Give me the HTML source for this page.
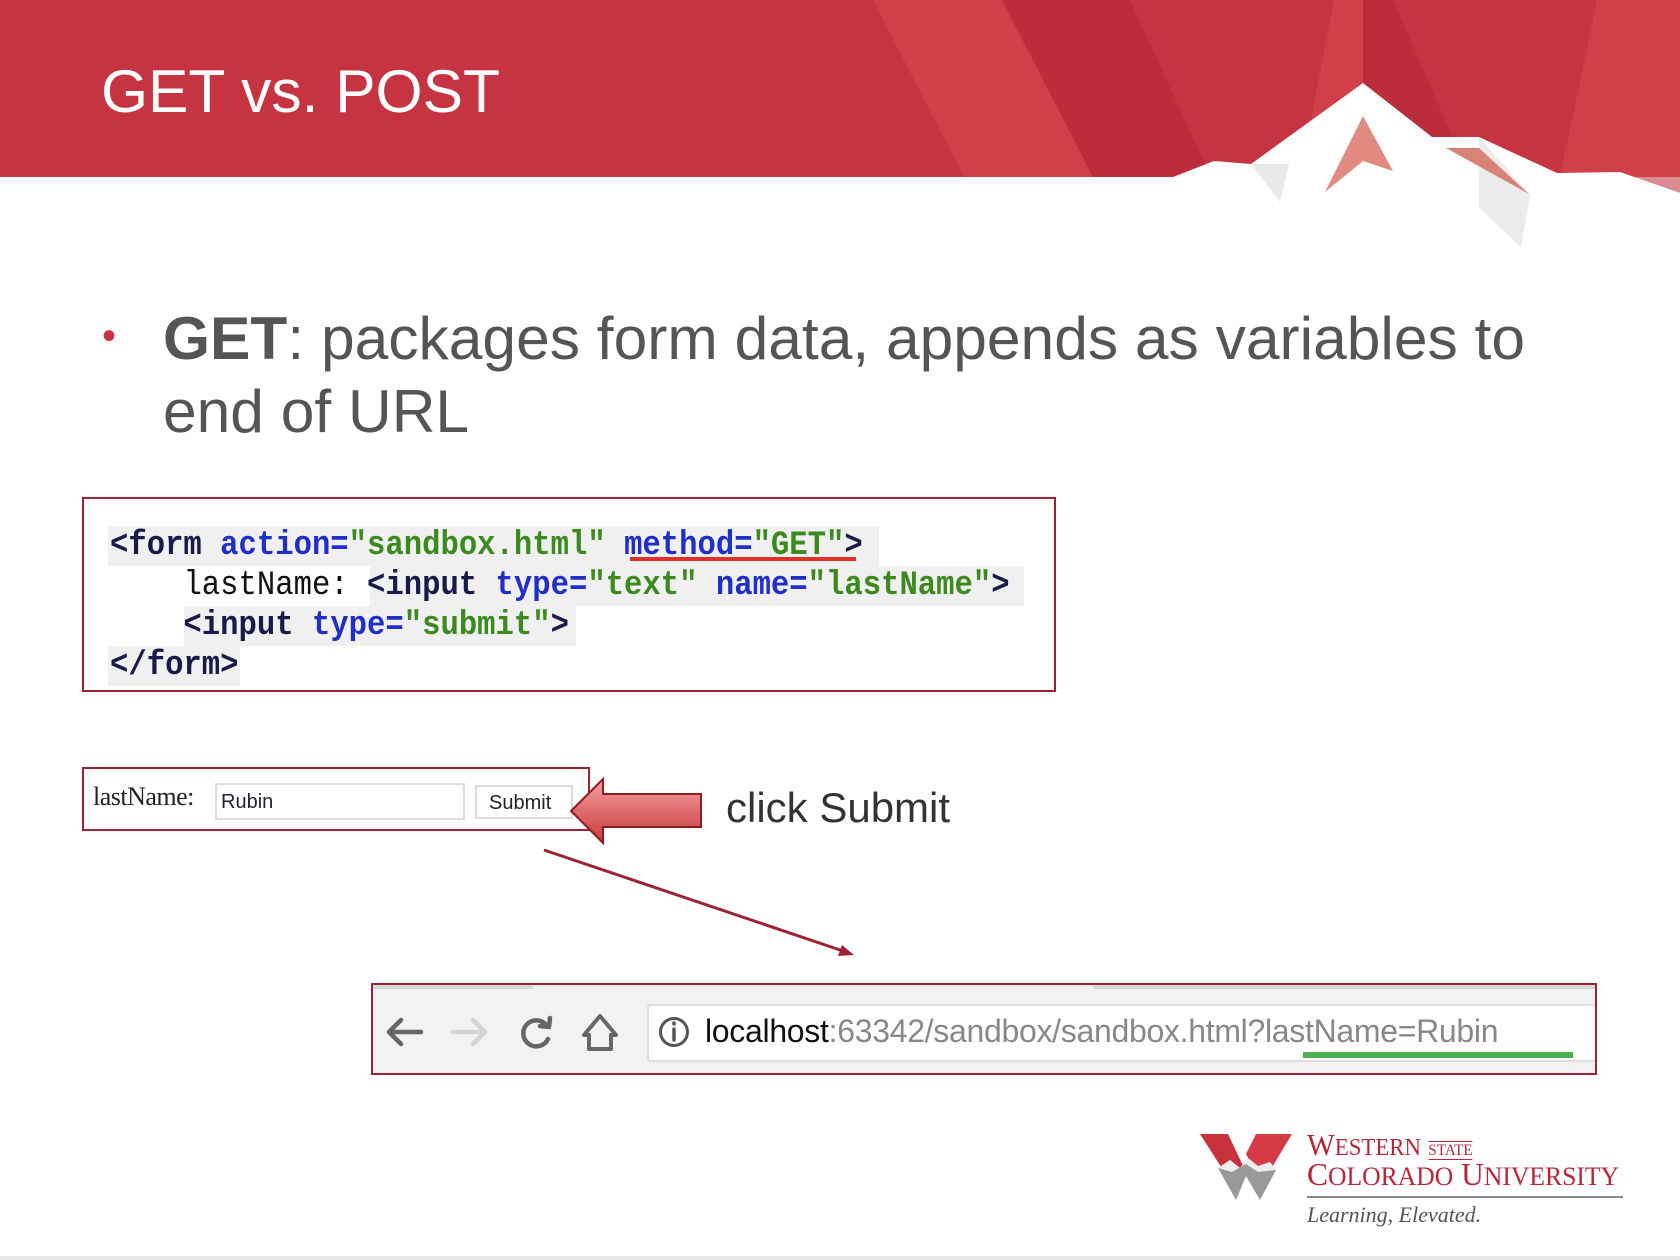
<!DOCTYPE html>
<html><head><meta charset="utf-8"><style>
*{margin:0;padding:0;box-sizing:border-box}
body{width:1680px;height:1260px;position:relative;background:#fff;overflow:hidden;font-family:"Liberation Sans",sans-serif}
.abs{position:absolute;white-space:nowrap}
.code{font-family:"Liberation Mono",monospace;font-size:30.6px;letter-spacing:0px;font-weight:bold;line-height:40px;white-space:pre;transform:scaleY(1.12);transform-origin:left center}
.b{color:#1f2fc8}.g{color:#3a8a1e}.k{color:#1a1a4a}.n{font-weight:normal;color:#111}
</style></head><body>
<svg class="abs" style="left:0;top:0" width="1680" height="260" viewBox="0 0 1680 260">
<rect x="0" y="0" width="1680" height="177" fill="#c63441"/>
<polygon points="873,0 1002,0 1093,177 964,177" fill="#d13f48"/>
<polygon points="1002,0 1130,0 1211,177 1093,177" fill="#bc2d3b"/>
<polygon points="1334,0 1363,0 1363,177 1300,177" fill="#d13f48"/>
<polygon points="1363,0 1393,0 1470,177 1363,177" fill="#bc2d3b"/>
<polygon points="1597,0 1680,0 1680,177 1560,177" fill="#d13f48"/>
<polygon points="1560,177 1680,177 1680,193 1620,172" fill="#d98a92"/>
<polygon points="0,177 1173,177 1214,161 1251,164 1363,83 1432,137 1479,137 1557,173 1620,172 1680,193 1680,260 0,260" fill="#fff"/>
<polygon points="1251,164 1289,164 1280,202" fill="#e9e9e9"/>
<polygon points="1479,137 1479,207 1521,248 1530,195" fill="#ececec"/>
<polygon points="1363,116 1393,171 1363,161 1325,192" fill="#e08a80"/>
<polygon points="1446,148 1479,148 1529,194" fill="#d88378"/>
</svg>
<div class="abs" style="left:101px;top:56px;font-size:60.5px;color:#fff;line-height:70px">GET vs. POST</div>
<div class="abs" style="left:102px;top:314px;font-size:40px;color:#c63441">•</div>
<div class="abs" style="left:163px;top:302px;font-size:60.5px;color:#555;line-height:73px"><b>GET</b>: packages form data, appends as variables to<br>end of URL</div>

<div class="abs" style="left:82px;top:497px;width:974px;height:195px;border:2px solid #9b2335"></div>
<div class="abs" style="left:108px;top:526px;width:771px;height:40px;background:#f0f0f0"></div>
<div class="abs" style="left:370px;top:566px;width:654px;height:40px;background:#f0f0f0"></div>
<div class="abs" style="left:184px;top:606px;width:392px;height:40px;background:#f0f0f0"></div>
<div class="abs" style="left:108px;top:646px;width:132px;height:40px;background:#f0f0f0"></div>
<div class="abs code" style="left:110px;top:526px"><span class="k">&lt;form</span> <span class="b">action=</span><span class="g">"sandbox.html"</span> <span class="b">method=</span><span class="g">"GET"</span><span class="k">&gt;</span></div>
<div class="abs code" style="left:110px;top:566px"><span class="k">    <span class="n">lastName:</span> &lt;input</span> <span class="b">type=</span><span class="g">"text"</span> <span class="b">name=</span><span class="g">"lastName"</span><span class="k">&gt;</span></div>
<div class="abs code" style="left:110px;top:606px"><span class="k">    &lt;input</span> <span class="b">type=</span><span class="g">"submit"</span><span class="k">&gt;</span></div>
<div class="abs code" style="left:110px;top:646px"><span class="k">&lt;/form&gt;</span></div>
<div class="abs" style="left:630px;top:557px;width:226px;height:4px;background:#e0302a"></div>

<div class="abs" style="left:82px;top:767px;width:508px;height:64px;border:2px solid #9b2335"></div>
<div class="abs" style="left:93px;top:782px;font-family:'Liberation Serif',serif;font-size:26px;color:#222;letter-spacing:-0.5px">lastName:</div>
<div class="abs" style="left:215px;top:783px;width:250px;height:37px;border:2px solid #ddd;font-size:20px;padding:6px 4px;color:#223">Rubin</div>
<div class="abs" style="left:475px;top:785px;width:98px;height:34px;border:2px solid #ddd;font-size:20px;padding:5px 12px;color:#222">Submit</div>
<svg class="abs" style="left:565px;top:775px" width="145" height="72">
<defs><linearGradient id="ag" x1="0" y1="0" x2="0" y2="1"><stop offset="0" stop-color="#f4a0a0"/><stop offset="1" stop-color="#c83a3a"/></linearGradient></defs>
<polygon points="6,36 38,4 38,19 136,19 136,52 38,52 38,68" fill="url(#ag)" stroke="#8e1e24" stroke-width="2"/>
</svg>
<div class="abs" style="left:726px;top:784px;font-size:42px;color:#333">click Submit</div>
<svg class="abs" style="left:540px;top:845px" width="320" height="115">
<line x1="4" y1="5" x2="306" y2="107" stroke="#9b2335" stroke-width="3"/>
<polygon points="314,110 298,111 302,100" fill="#9b2335"/>
</svg>

<div class="abs" style="left:371px;top:983px;width:1226px;height:92px;border:2px solid #9b2335;background:#f2f2f2;overflow:hidden">
<div class="abs" style="left:0;top:0;width:160px;height:4px;background:#d8d8d8"></div>
<div class="abs" style="left:720px;top:0;width:510px;height:4px;background:#d8d8d8"></div>
<div class="abs" style="left:274px;top:19px;width:960px;height:58px;background:#fff;border:2px solid #ddd;border-radius:4px"></div>
</div>
<svg class="abs" style="left:380px;top:1010px" width="320" height="50" fill="none" stroke-width="4.5" stroke-linecap="round" stroke-linejoin="round">
<path d="M41,22 H9 M21,10 L9,22 L21,34" stroke="#666"/>
<path d="M73,22 H105 M93,10 L105,22 L93,34" stroke="#d4d4d4"/>
<path d="M167,16 A13,13 0 1 0 168,29" stroke="#666"/><path d="M170,8 L169,17 L160,16" stroke="#666"/>
<path d="M209,39 V25 H204 L220,6 L236,25 H231 V39 Z" stroke="#666" stroke-width="4"/>
<circle cx="294" cy="22" r="13.5" stroke="#555" stroke-width="3"/>
<path d="M294,19 V30 M294,13 V14" stroke="#555" stroke-width="3.5"/>
</svg>
<div class="abs" style="left:705px;top:1013px;font-size:32px;color:#888;letter-spacing:-0.3px"><span style="color:#111">localhost</span>:63342/sandbox/sandbox.html?lastName=Rubin</div>
<div class="abs" style="left:1303px;top:1052px;width:270px;height:6px;background:#4caf50"></div>

<svg class="abs" style="left:1198px;top:1132px" width="98" height="70">
<polygon points="2,2 30,2 48,40 34,52" fill="#c9323d"/>
<polygon points="48,22 58,2 94,2 64,52" fill="#d63a44"/>
<polygon points="20,36 32,28 42,36 50,26 60,34 72,30 78,38 62,68 48,44 38,68" fill="#999"/>
<polygon points="20,36 32,28 42,36 50,26 60,34 72,30 78,38 60,40 48,32 34,40" fill="#eee"/>
</svg>
<div class="abs" style="left:1307px;top:1128px;font-family:'Liberation Serif',serif;color:#b8263a;font-size:31px;line-height:34px;transform:scaleX(0.95);transform-origin:left">W<span style="font-size:24px">ESTERN</span> <span style="font-size:16px;border-top:1px solid #b8263a;border-bottom:1px solid #b8263a">STATE</span></div>
<div class="abs" style="left:1307px;top:1157px;font-family:'Liberation Serif',serif;color:#b8263a;font-size:32px;line-height:34px;transform:scaleX(0.985);transform-origin:left">C<span style="font-size:26px">OLORADO</span> U<span style="font-size:26px">NIVERSITY</span></div>
<div class="abs" style="left:1307px;top:1196px;width:316px;height:2px;background:#888"></div>
<div class="abs" style="left:1307px;top:1202px;font-family:'Liberation Serif',serif;font-style:italic;font-size:22px;color:#555">Learning, Elevated.</div>
<div class="abs" style="left:0;top:1256px;width:1680px;height:4px;background:#e6e6e6"></div>
</body></html>
